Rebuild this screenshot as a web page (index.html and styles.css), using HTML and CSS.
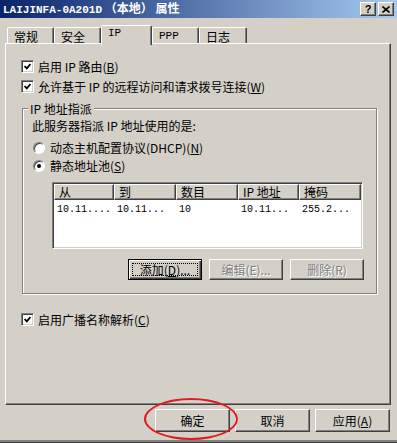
FILE: index.html
```html
<!DOCTYPE html>
<html>
<head>
  <meta charset="utf-8">
  <link rel="stylesheet" href="styles.css">
</head>
<body>
<div class="window">

  <div class="titlebar">
    <span class="title"><span class="title-latin">LAIJINFA-0A201D</span> （本地） 属性</span>
    <div class="caption-buttons">
      <span class="cap-btn cap-help">?</span>
      <span class="cap-btn">
        <svg width="8" height="7" viewBox="0 0 8 7"><path d="M0.5 0.5 L7.5 6.5 M7.5 0.5 L0.5 6.5" stroke="#000" stroke-width="1.6"/></svg>
      </span>
    </div>
  </div>

  <div class="tabstrip">
    <div class="tab tab-general">常规</div>
    <div class="tab tab-security">安全</div>
    <div class="tab tab-ip selected">IP</div>
    <div class="tab tab-ppp">PPP</div>
    <div class="tab tab-log">日志</div>
  </div>

  <div class="panel">
    <div class="check-row">
      <span class="checkbox"><svg width="7" height="7" viewBox="0 0 7 7"><path d="M0.5 3 L2.8 5.4 L6.5 1" fill="none" stroke="#000" stroke-width="1.8"/></svg></span>
      <span>启用 IP 路由(<u>B</u>)</span>
    </div>
    <div class="check-row second">
      <span class="checkbox"><svg width="7" height="7" viewBox="0 0 7 7"><path d="M0.5 3 L2.8 5.4 L6.5 1" fill="none" stroke="#000" stroke-width="1.8"/></svg></span>
      <span>允许基于 IP 的远程访问和请求拨号连接(<u>W</u>)</span>
    </div>

    <div class="group">
      <span class="group-label">IP 地址指派</span>
      <div class="line">此服务器指派 IP 地址使用的是:</div>
      <div class="radio-row first">
        <span class="radio"></span>
        <span>动态主机配置协议(DHCP)(<u>N</u>)</span>
      </div>
      <div class="radio-row">
        <span class="radio on"></span>
        <span>静态地址池(<u>S</u>)</span>
      </div>

      <div class="listview">
        <div class="lv-header">
          <span class="lv-col">从</span>
          <span class="lv-col">到</span>
          <span class="lv-col">数目</span>
          <span class="lv-col">IP 地址</span>
          <span class="lv-col">掩码</span>
        </div>
        <div class="lv-row">
          <span>10.11....</span>
          <span>10.11...</span>
          <span>10</span>
          <span>10.11...</span>
          <span>255.2...</span>
        </div>
      </div>

      <div class="pool-buttons">
        <span class="btn default">添加(<u>D</u>)...</span>
        <span class="btn disabled">编辑(E)...</span>
        <span class="btn disabled">删除(R)</span>
      </div>
    </div>

    <div class="check-row third">
      <span class="checkbox"><svg width="7" height="7" viewBox="0 0 7 7"><path d="M0.5 3 L2.8 5.4 L6.5 1" fill="none" stroke="#000" stroke-width="1.8"/></svg></span>
      <span>启用广播名称解析(<u>C</u>)</span>
    </div>
  </div>

  <div class="footer">
    <span class="btn wide">确定</span>
    <span class="btn wide">取消</span>
    <span class="btn wide">应用(<u>A</u>)</span>
  </div>

  <div class="highlight"></div>
</div>
</body>
</html>
```

FILE: styles.css
```css
* {
  box-sizing: border-box;
}

body {
  margin: 0;
  background: #d4d0c8;
  color: #000;
  font: 12px/13px "Noto Sans CJK SC", "Noto Sans", sans-serif;
}

u {
  text-decoration: underline;
  text-underline-offset: 1px;
}

.window {
  position: relative;
  width: 397px;
  height: 443px;
  display: flex;
  flex-direction: column;
  background: #d4d0c8;
  box-shadow: inset 0 -1px #404040, inset 0 -3px #808080;
}

/* title bar */
.titlebar {
  height: 18px;
  display: flex;
  align-items: center;
  justify-content: space-between;
  padding: 0 3px 0 3px;
  background: linear-gradient(to right, #0a246a, #a6caf0);
  color: #fff;
}

.title {
  font-weight: bold;
  font-size: 12px;
  line-height: 16px;
  white-space: nowrap;
}

.title-latin {
  font-family: "Liberation Mono", monospace;
  font-size: 11px;
}

.caption-buttons {
  display: flex;
  gap: 2px;
}

.cap-btn {
  width: 16px;
  height: 14px;
  display: flex;
  align-items: center;
  justify-content: center;
  background: #d4d0c8;
  color: #000;
  border: 1px solid;
  border-color: #fff #404040 #404040 #fff;
  box-shadow: inset -1px -1px #808080;
}

.cap-help {
  font: bold 11px/1 "Liberation Sans", sans-serif;
}

/* tabs */
.tabstrip {
  position: relative;
  z-index: 1;
  height: 18px;
  margin-top: 7px;
  padding-left: 7px;
  display: flex;
  align-items: flex-end;
}

.tab {
  height: 16px;
  padding: 2px 0 0 6px;
  background: #d4d0c8;
  border: 1px solid;
  border-bottom: 0;
  border-color: #fff #404040 transparent #fff;
  border-radius: 2px 2px 0 0;
  box-shadow: inset -1px 0 #808080;
  white-space: nowrap;
}

.tab-general { width: 47px; }
.tab-security { width: 47px; }
.tab-ip { width: 51px; }
.tab-ppp { width: 47px; }
.tab-log { width: 48px; }

.tab-ip,
.tab-ppp {
  font-family: "Liberation Mono", monospace;
  font-size: 11px;
}

.tab.selected {
  height: 20px;
  margin-bottom: -2px;
  padding-top: 1px;
}

/* property page */
.panel {
  width: 386px;
  height: 362px;
  margin-left: 5px;
  padding: 16px 0 0 15px;
  display: flex;
  flex-direction: column;
  align-items: flex-start;
  border: 1px solid;
  border-color: #fff #404040 #404040 #fff;
  box-shadow: inset -1px -1px #808080;
}

.check-row {
  height: 13px;
  display: flex;
  align-items: center;
  gap: 4px;
  white-space: nowrap;
}

.check-row.second {
  margin-top: 7px;
}

.check-row.third {
  margin-top: 19px;
}

.checkbox {
  width: 13px;
  height: 13px;
  flex: none;
  display: flex;
  align-items: center;
  justify-content: center;
  background: #fff;
  border: 1px solid;
  border-color: #808080 #fff #fff #808080;
  box-shadow: inset 1px 1px #404040, inset -1px -1px #d4d0c8;
}

/* group box */
.group {
  position: relative;
  width: 355px;
  margin: 15px 0 0 1px;
  padding: 10px 10px 13px 9px;
  border: 1px solid #808080;
  box-shadow: inset 1px 1px #fff, 1px 1px #fff;
}

.group-label {
  position: absolute;
  top: -7px;
  left: 5px;
  padding: 0 2px;
  background: #d4d0c8;
  white-space: nowrap;
}

.line {
  height: 13px;
  white-space: nowrap;
}

.radio-row {
  height: 13px;
  margin: 5px 0 0 1px;
  display: flex;
  align-items: center;
  gap: 5px;
  white-space: nowrap;
}

.radio-row.first {
  margin-top: 9px;
}

.radio {
  position: relative;
  width: 12px;
  height: 12px;
  flex: none;
  border-radius: 50%;
  background: #fff;
  border: 1px solid;
  border-color: #808080 #fff #fff #808080;
  box-shadow: inset 1px 1px #404040;
}

.radio.on::after {
  content: "";
  position: absolute;
  left: 3px;
  top: 3px;
  width: 4px;
  height: 4px;
  border-radius: 50%;
  background: #000;
}

/* list view */
.listview {
  width: 311px;
  height: 67px;
  margin: 10px 0 0 20px;
  padding: 1px;
  background: #fff;
  border: 1px solid;
  border-color: #808080 #fff #fff #808080;
  box-shadow: inset 1px 1px #404040, inset -1px -1px #d4d0c8;
}

.lv-header,
.lv-row {
  display: grid;
  grid-template-columns: 60px 62px 62px 61px 1fr;
}

.lv-header {
  height: 16px;
  background: #d4d0c8;
}

.lv-col {
  padding: 0 0 0 4px;
  line-height: 14px;
  border: 1px solid;
  border-color: #fff #404040 #404040 #fff;
  box-shadow: inset -1px -1px #808080;
  white-space: nowrap;
}

.lv-row {
  margin-top: 3px;
  height: 13px;
  line-height: 13px;
  font-family: "Liberation Mono", monospace;
  font-size: 10px;
}

.lv-row span {
  padding-left: 3px;
  white-space: nowrap;
}

/* buttons */
.pool-buttons {
  margin: 10px 0 0 96px;
  display: flex;
  gap: 7px;
}

.btn {
  position: relative;
  width: 74px;
  height: 21px;
  display: flex;
  align-items: center;
  justify-content: center;
  background: #d4d0c8;
  border: 1px solid;
  border-color: #fff #404040 #404040 #fff;
  box-shadow: inset -1px -1px #808080, inset 1px 1px #d4d0c8;
  white-space: nowrap;
}

.btn.default {
  border-color: #000;
  box-shadow: inset 1px 1px #fff, inset -1px -1px #404040, inset -2px -2px #808080;
}

.btn.default::after {
  content: "";
  position: absolute;
  inset: 3px;
  border: 1px dotted #000;
}

.btn.disabled {
  color: #808080;
  text-shadow: 1px 1px #fff;
}

.footer {
  margin-top: 4px;
  padding-right: 7px;
  display: flex;
  justify-content: flex-end;
  gap: 5px;
}

.btn.wide {
  width: 75px;
  height: 23px;
}

/* red marker drawn over the OK button */
.highlight {
  position: absolute;
  left: 144px;
  top: 398px;
  width: 94px;
  height: 42px;
  border: 2px solid #e01a1f;
  border-radius: 50%;
  pointer-events: none;
}
```
